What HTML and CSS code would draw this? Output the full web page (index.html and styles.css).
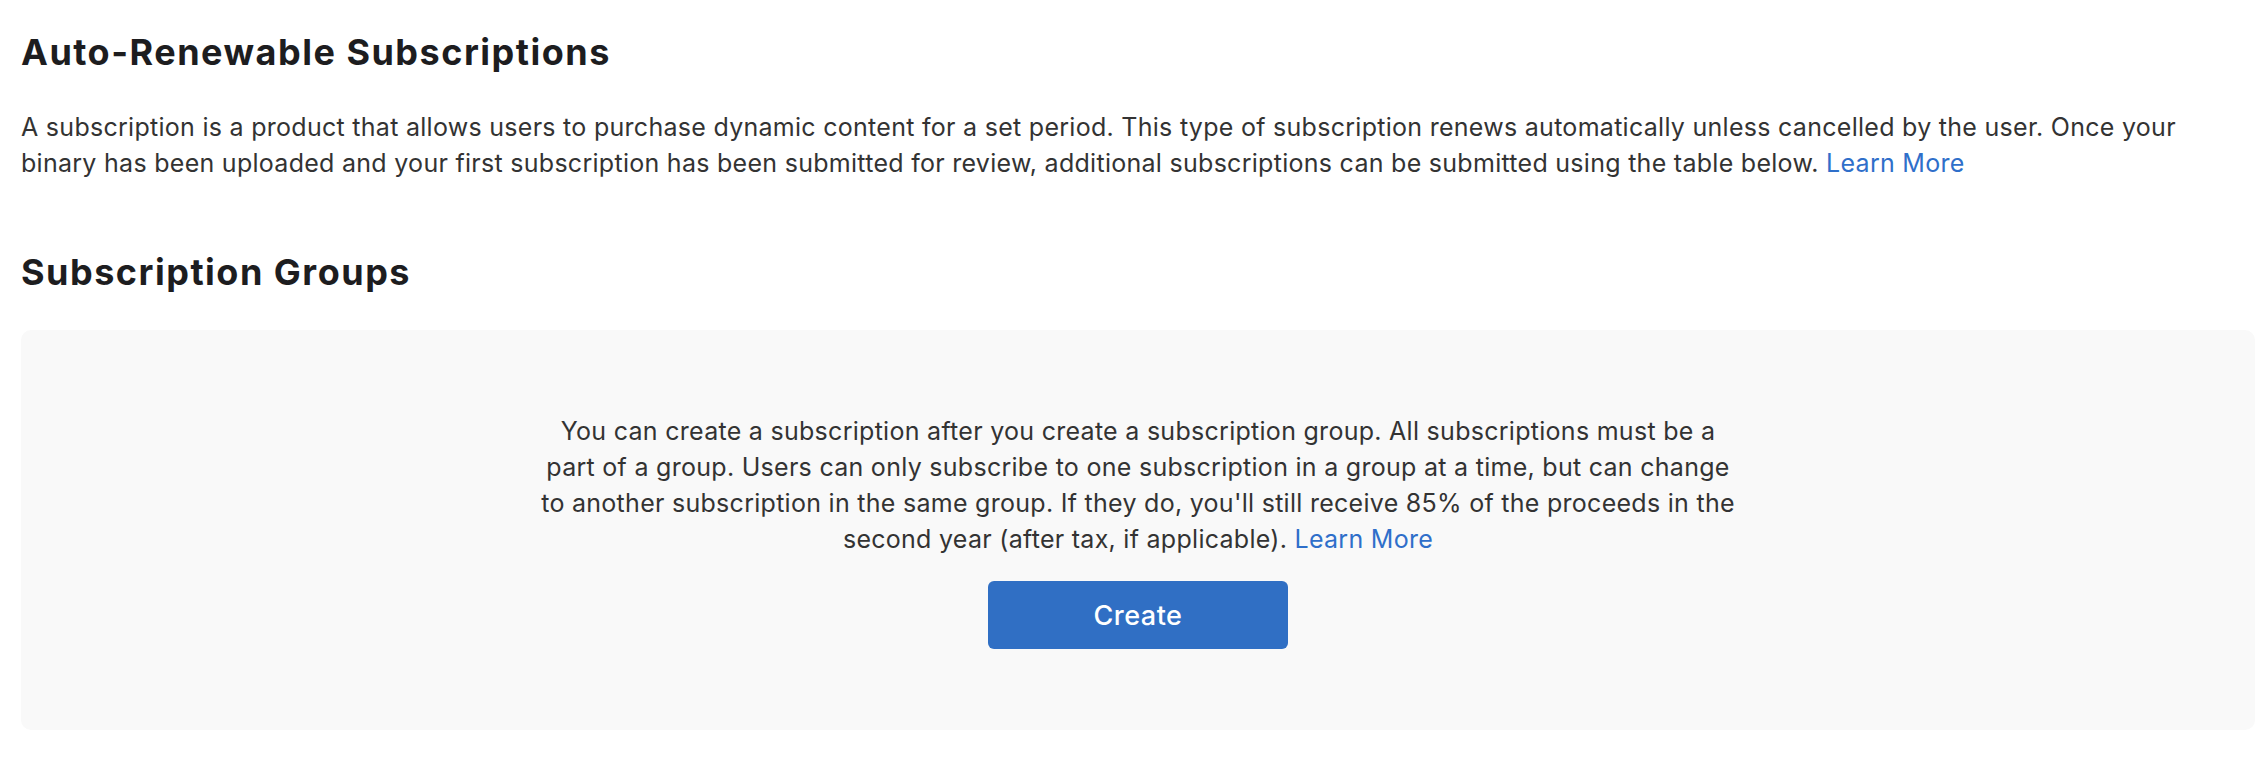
FILE: index.html
```html
<!DOCTYPE html>
<html lang="en">
<head>
    <meta charset="UTF-8">
    <meta name="viewport" content="width=device-width, initial-scale=1.0">
    <title>Subscriptions</title>
    <link rel="stylesheet" href="styles.css">
</head>
<body>

    <main class="page">
        <section class="intro">
            <h1 class="section-title">Auto-Renewable Subscriptions</h1>
            <p class="intro-text">A subscription is a product that allows users to purchase dynamic content for a set period. This type of subscription renews automatically unless cancelled by the user. Once your binary has been uploaded and your first subscription has been submitted for review, additional subscriptions can be submitted using the table below. <a href="#" class="link">Learn More</a></p>
        </section>

        <section class="groups">
            <h2 class="section-title">Subscription Groups</h2>
            <div class="empty-state">
                <p class="empty-text">You can create a subscription after you create a subscription group. All subscriptions must be a part of a group. Users can only subscribe to one subscription in a group at a time, but can change to another subscription in the same group. If they do, you'll still receive 85% of the proceeds in the second year (after tax, if applicable). <a href="#" class="link">Learn More</a></p>
                <button class="create-btn">Create</button>
            </div>
        </section>
    </main>

</body>
</html>
```

FILE: styles.css
```css
:root {
    --title-color: #1d1d1f;
    --text-color: #333;
    --link-color: #2f6fca;
    --panel-color: #f9f9f9;
    --button-color: #306fc4;
}

body {
    margin: 0;
    background-color: #fff;
    font-family: 'Inter', 'Noto Sans', sans-serif;
    color: var(--text-color);
}

.page {
    padding: 31px 7px 0 21px;
}

.section-title {
    margin: 0;
    font-size: 36px;
    line-height: 42px;
    font-weight: 700;
    color: var(--title-color);
    letter-spacing: 1.5px;
}

.intro .section-title {
    margin-bottom: 36px;
}

.intro-text {
    margin: 0 0 70px;
    font-size: 25px;
    line-height: 36px;
    letter-spacing: 0.28px;
}

.link {
    color: var(--link-color);
    text-decoration: none;
}

.groups .section-title {
    margin-bottom: 37px;
}

.empty-state {
    background-color: var(--panel-color);
    border-radius: 10px;
    padding: 83px 20px 81px;
    display: flex;
    flex-direction: column;
    align-items: center;
    gap: 24px;
}

.empty-text {
    margin: 0;
    max-width: 1205px;
    text-align: center;
    font-size: 25px;
    line-height: 36px;
    letter-spacing: 0.28px;
}

.create-btn {
    width: 300px;
    height: 68px;
    border: none;
    border-radius: 6px;
    background-color: var(--button-color);
    color: #fff;
    font-family: inherit;
    font-size: 27px;
    font-weight: 500;
    letter-spacing: 0.5px;
    cursor: pointer;
}
```
